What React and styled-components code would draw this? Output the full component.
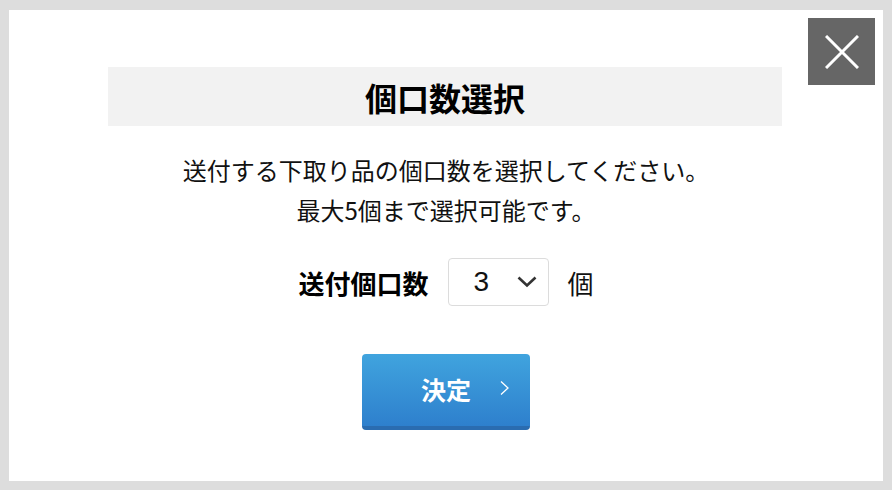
import React, { useState } from "react";
import styled, { createGlobalStyle } from "styled-components";

const GlobalStyle = createGlobalStyle`
  html, body {
    margin: 0;
    padding: 0;
    background: #dddddd;
  }
  * {
    box-sizing: border-box;
  }
  body {
    font-family: "Noto Sans CJK JP", "Noto Sans", sans-serif;
    color: #222;
  }
`;

const Frame = styled.div`
  width: 892px;
  height: 490px;
  padding: 10px 9px 9px 9px;
`;

const Panel = styled.div`
  position: relative;
  height: 100%;
  background: #fff;
  display: flex;
  flex-direction: column;
  align-items: center;
`;

const CloseButton = styled.button`
  position: absolute;
  top: 8px;
  right: 8px;
  width: 67px;
  height: 67px;
  border: none;
  padding: 0;
  background: #666666;
  display: flex;
  align-items: center;
  justify-content: center;
  cursor: pointer;
`;

const TitleBar = styled.h2`
  align-self: stretch;
  margin: 57px 101px 0 99px;
  height: 59px;
  background: #f2f2f2;
  display: flex;
  align-items: center;
  justify-content: center;
  font-size: 32px;
  font-weight: 700;
  color: #000;
`;

const Message = styled.p`
  margin: 24px 0 0;
  font-size: 24px;
  line-height: 40px;
  text-align: center;
  color: #111;
`;

const SelectRow = styled.div`
  margin-top: 28px;
  display: flex;
  align-items: center;
  gap: 19px;
`;

const Label = styled.span`
  font-size: 26px;
  font-weight: 700;
  color: #000;
`;

const Unit = styled.span`
  font-size: 26px;
  color: #111;
`;

const SelectWrap = styled.div`
  position: relative;
  width: 101px;
  height: 48px;
`;

const Select = styled.select`
  appearance: none;
  width: 100%;
  height: 100%;
  border: 1px solid #dcdcdc;
  border-radius: 4px;
  background: #fff;
  padding: 0 0 1px 25px;
  font-family: "Liberation Sans", Arial, sans-serif;
  font-size: 28px;
  color: #111;
  outline: none;
`;

const Chevron = styled.svg`
  position: absolute;
  right: 12px;
  top: 50%;
  transform: translateY(-50%);
  pointer-events: none;
`;

const SubmitButton = styled.button`
  position: relative;
  margin-top: 48px;
  width: 168px;
  height: 76px;
  border: none;
  border-bottom: 4px solid #2a6cb0;
  border-radius: 4px;
  background: linear-gradient(to bottom, #40a4de, #2e80cd);
  color: #fff;
  font-family: "Noto Sans CJK JP", sans-serif;
  font-size: 25px;
  font-weight: 700;
  cursor: pointer;
  padding: 0 0 2px;
`;

const Arrow = styled.svg`
  position: absolute;
  right: 21px;
  top: 50%;
  transform: translateY(-50%);
  margin-top: -2px;
`;

export default function App() {
  const [count, setCount] = useState("3");

  return (
    <>
      <GlobalStyle />
      <Frame>
        <Panel>
          <CloseButton aria-label="閉じる">
            <svg width="34" height="34" viewBox="0 0 34 34">
              <path
                d="M1 1 L33 33 M33 1 L1 33"
                stroke="#fff"
                strokeWidth="3"
                fill="none"
              />
            </svg>
          </CloseButton>
          <TitleBar>個口数選択</TitleBar>
          <Message>
            送付する下取り品の個口数を選択してください。
            <br />
            最大5個まで選択可能です。
          </Message>
          <SelectRow>
            <Label>送付個口数</Label>
            <SelectWrap>
              <Select value={count} onChange={(e) => setCount(e.target.value)}>
                {["1", "2", "3", "4", "5"].map((n) => (
                  <option key={n} value={n}>
                    {n}
                  </option>
                ))}
              </Select>
              <Chevron width="20" height="12" viewBox="0 0 20 12">
                <path
                  d="M1.5 1.5 L10 9.5 L18.5 1.5"
                  stroke="#333"
                  strokeWidth="2.6"
                  fill="none"
                />
              </Chevron>
            </SelectWrap>
            <Unit>個</Unit>
          </SelectRow>
          <SubmitButton>
            決定
            <Arrow width="9" height="15" viewBox="0 0 9 15">
              <path
                d="M1 1 L8 7.5 L1 14"
                stroke="#fff"
                strokeWidth="1.3"
                fill="none"
              />
            </Arrow>
          </SubmitButton>
        </Panel>
      </Frame>
    </>
  );
}
